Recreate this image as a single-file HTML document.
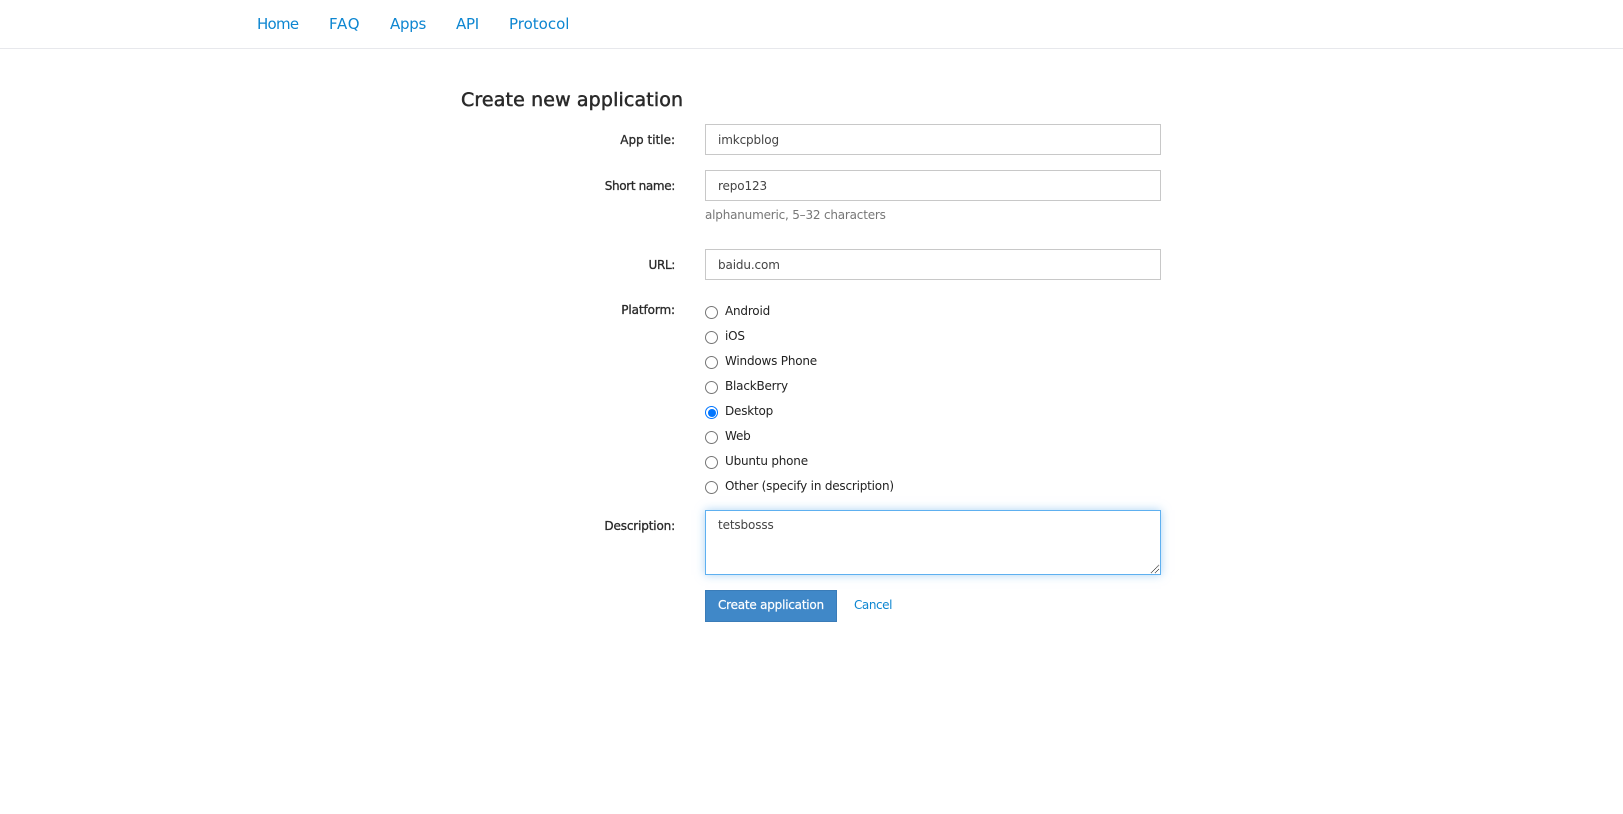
<!DOCTYPE html>
<html lang="en">
<head>
<meta charset="utf-8">
<title>Create new application</title>
<style>
html,body{margin:0;padding:0;width:1623px;height:814px;background:#fff;overflow:hidden}
body{position:relative;font-family:"DejaVu Sans","Liberation Sans",sans-serif;color:#222}
.t{position:absolute;white-space:nowrap;line-height:16px}
a{text-decoration:none;color:#0d86d1}
.nav{font-size:15px;line-height:20px;top:14px}
.bar{position:absolute;left:0;top:48px;width:1623px;height:1px;background:#e7e8ec}
.lab{right:948px;font-size:12px;font-weight:normal;color:#2a2a2a;-webkit-text-stroke:.3px #2a2a2a;letter-spacing:-.35px}
.box{position:absolute;left:705px;width:454px;height:29px;border:1px solid #c8c8c8;background:#fff}
.val{left:718px;font-size:12px;color:#444;letter-spacing:-.13px}
.rad{position:absolute;left:705px;width:11px;height:11px;border:1px solid #767676;border-radius:50%;background:#fff}
.opt{left:725px;font-size:12px;color:#222;letter-spacing:-.2px}
</style>
</head>
<body>
<a class="t nav" style="left:257px;letter-spacing:-.75px" href="#">Home</a>
<a class="t nav" style="left:329px;letter-spacing:.75px" href="#">FAQ</a>
<a class="t nav" style="left:390px;letter-spacing:-.25px" href="#">Apps</a>
<a class="t nav" style="left:456px;letter-spacing:-.25px" href="#">API</a>
<a class="t nav" style="left:509px;letter-spacing:0" href="#">Protocol</a>
<div class="bar"></div>

<div class="t" style="left:461px;top:88px;font-size:19px;line-height:24px;color:#2a2a2a;-webkit-text-stroke:.5px #2a2a2a;letter-spacing:.13px">Create new application</div>

<div class="t lab" style="top:132px;letter-spacing:0">App title:</div>
<div class="box" style="top:124px"></div>
<div class="t val" style="top:132px">imkcpblog</div>

<div class="t lab" style="top:178px">Short name:</div>
<div class="box" style="top:170px"></div>
<div class="t val" style="top:178px">repo123</div>
<div class="t" style="left:705px;top:207px;font-size:12px;color:#777;letter-spacing:-.2px">alphanumeric, 5–32 characters</div>

<div class="t lab" style="top:257px">URL:</div>
<div class="box" style="top:249px"></div>
<div class="t val" style="top:257px">baidu.com</div>

<div class="t lab" style="top:302px;letter-spacing:-.1px">Platform:</div>
<div class="rad" style="top:306px"></div><div class="t opt" style="top:303px">Android</div>
<div class="rad" style="top:331px"></div><div class="t opt" style="top:328px">iOS</div>
<div class="rad" style="top:356px"></div><div class="t opt" style="top:353px">Windows Phone</div>
<div class="rad" style="top:381px"></div><div class="t opt" style="top:378px">BlackBerry</div>
<div class="rad" style="top:406px;border-color:#0075ff"><div style="position:absolute;left:1.5px;top:1.5px;width:8px;height:8px;border-radius:50%;background:#0075ff"></div></div><div class="t opt" style="top:403px">Desktop</div>
<div class="rad" style="top:431px"></div><div class="t opt" style="top:428px">Web</div>
<div class="rad" style="top:456px"></div><div class="t opt" style="top:453px">Ubuntu phone</div>
<div class="rad" style="top:481px"></div><div class="t opt" style="top:478px">Other (specify in description)</div>

<div class="t lab" style="top:518px;letter-spacing:-.15px">Description:</div>
<div style="position:absolute;left:705px;top:510px;width:454px;height:63px;border:1px solid #5eb0f0;background:#fff;box-shadow:0 0 9px rgba(102,175,233,.55)"></div>
<div class="t val" style="top:517px">tetsbosss</div>
<svg style="position:absolute;left:1150px;top:564px" width="10" height="10" viewBox="0 0 10 10"><path d="M1 9L9 1M5 9L9 5" stroke="#444" stroke-width="1" fill="none" stroke-dasharray="1 .5"/></svg>

<div style="position:absolute;left:705px;top:590px;width:130px;height:30px;border:1px solid #3a7cb8;background:#4088c8"></div>
<div class="t" style="left:718px;top:597px;font-size:12px;color:#fff;-webkit-text-stroke:.2px #fff;letter-spacing:-.22px">Create application</div>
<a class="t" style="left:854px;top:597px;font-size:12px;letter-spacing:-.45px" href="#">Cancel</a>
</body>
</html>
